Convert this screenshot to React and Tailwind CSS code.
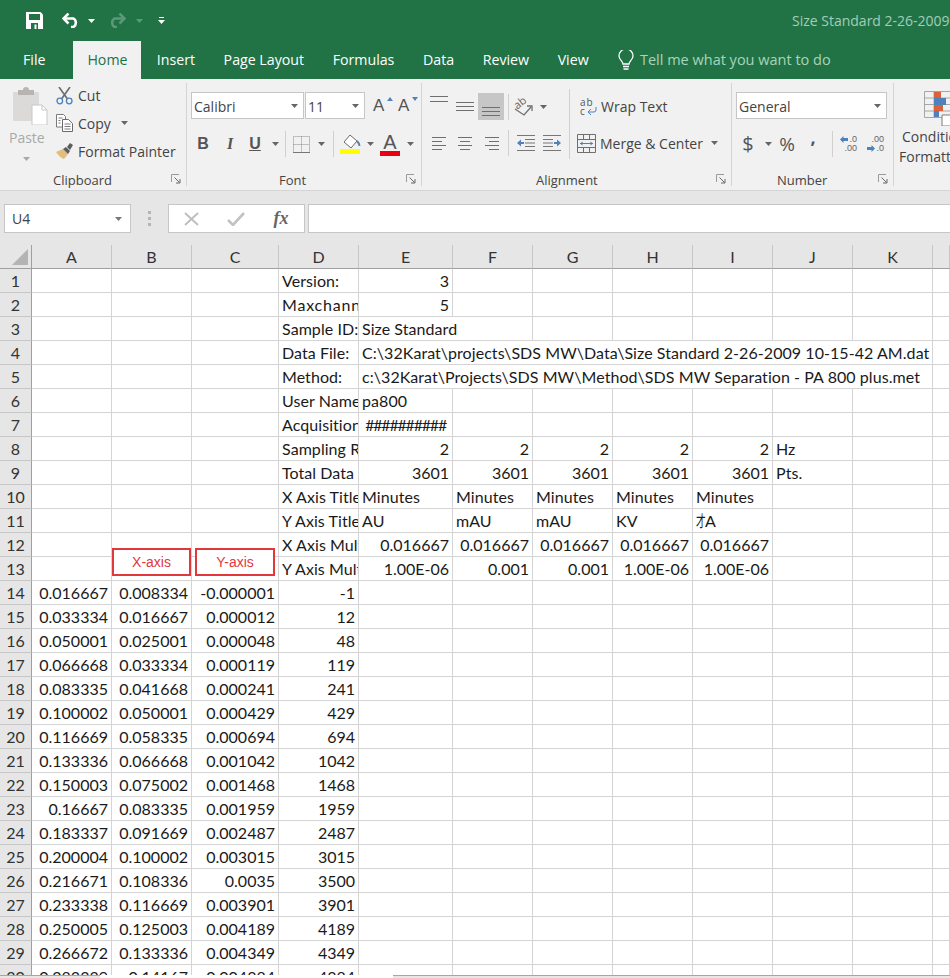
import React from 'react';

const COLS = ['A', 'B', 'C', 'D', 'E', 'F', 'G', 'H', 'I', 'J', 'K', ''];
const L = (t, span) => ({ t, span });
const N = (t) => ({ t, right: true });

const HEAD_ROWS = {
  1: { 3: L('Version:'), 4: N('3') },
  2: { 3: { t: 'Maxchannels:', wide: true }, 4: N('5') },
  3: { 3: L('Sample ID:'), 4: L('Size Standard', 2) },
  4: { 3: L('Data File:'), 4: L('C:\\32Karat\\projects\\SDS MW\\Data\\Size Standard 2-26-2009 10-15-42 AM.dat', 7) },
  5: { 3: L('Method:'), 4: L('c:\\32Karat\\Projects\\SDS MW\\Method\\SDS MW Separation - PA 800 plus.met', 7) },
  6: { 3: L('User Name:'), 4: L('pa800') },
  7: { 3: L('Acquisition Date:'), 4: { t: '##########', right: true, hash: true } },
  8: { 3: L('Sampling Rate:'), 4: N('2'), 5: N('2'), 6: N('2'), 7: N('2'), 8: N('2'), 9: L('Hz') },
  9: { 3: L('Total Data Points:'), 4: N('3601'), 5: N('3601'), 6: N('3601'), 7: N('3601'), 8: N('3601'), 9: L('Pts.') },
  10: { 3: L('X Axis Title:'), 4: L('Minutes'), 5: L('Minutes'), 6: L('Minutes'), 7: L('Minutes'), 8: L('Minutes') },
  11: { 3: L('Y Axis Title:'), 4: L('AU'), 5: L('mAU'), 6: L('mAU'), 7: L('KV'), 8: { t: <><span className="inline-block w-[9px] origin-left scale-x-[0.6]">才</span>A</> } },
  12: { 3: L('X Axis Multiplier:'), 4: N('0.016667'), 5: N('0.016667'), 6: N('0.016667'), 7: N('0.016667'), 8: N('0.016667') },
  13: { 3: L('Y Axis Multiplier:'), 4: N('1.00E-06'), 5: N('0.001'), 6: N('0.001'), 7: N('1.00E-06'), 8: N('1.00E-06') },
};

const DATA_ROWS = [
  ['0.016667', '0.008334', '-0.000001', '-1'],
  ['0.033334', '0.016667', '0.000012', '12'],
  ['0.050001', '0.025001', '0.000048', '48'],
  ['0.066668', '0.033334', '0.000119', '119'],
  ['0.083335', '0.041668', '0.000241', '241'],
  ['0.100002', '0.050001', '0.000429', '429'],
  ['0.116669', '0.058335', '0.000694', '694'],
  ['0.133336', '0.066668', '0.001042', '1042'],
  ['0.150003', '0.075002', '0.001468', '1468'],
  ['0.16667', '0.083335', '0.001959', '1959'],
  ['0.183337', '0.091669', '0.002487', '2487'],
  ['0.200004', '0.100002', '0.003015', '3015'],
  ['0.216671', '0.108336', '0.0035', '3500'],
  ['0.233338', '0.116669', '0.003901', '3901'],
  ['0.250005', '0.125003', '0.004189', '4189'],
  ['0.266672', '0.133336', '0.004349', '4349'],
  ['0.283339', '0.14167', '0.004384', '4384'],
];

function rowCells(n) {
  if (n <= 13) return HEAD_ROWS[n] || {};
  const d = DATA_ROWS[n - 14];
  return { 0: N(d[0]), 1: N(d[1]), 2: N(d[2]), 3: N(d[3]) };
}

function Caret({ color = '#666' }) {
  return (
    <svg width="7" height="4" viewBox="0 0 7 4" className="shrink-0">
      <path d="M0 0h7L3.5 4z" fill={color} />
    </svg>
  );
}

function Box({ w, children, className = '' }) {
  return <div style={{ width: w }} className={`flex items-center justify-center shrink-0 h-full ${className}`}>{children}</div>;
}

function Sep() {
  return <div className="w-px h-[26px] bg-[#d0d0d0] shrink-0" />;
}

function Launcher() {
  return (
    <svg width="10" height="10" viewBox="0 0 10 10" className="shrink-0">
      <path d="M.5 8V.5H8" fill="none" stroke="#9a9a9a" />
      <path d="M3.5 3.5l5 5M9 5v4H5" fill="none" stroke="#666" />
    </svg>
  );
}

function Group({ width, label, labelPad, children }) {
  return (
    <div style={{ width }} className="h-[103px] shrink-0 flex flex-col border-r border-[#d4d4d4]">
      <div className="flex-1 min-h-0">{children}</div>
      <div className="h-[14px] flex items-center justify-between text-[13px] leading-[14px] text-[#444] pr-[5px]">
        <span className="pt-[2px]" style={{ paddingLeft: labelPad }}>{label}</span>
        <Launcher />
      </div>
    </div>
  );
}

function Select({ w, text, className = '' }) {
  return (
    <div style={{ width: w }} className={`h-[27px] shrink-0 bg-white border border-[#c6c6c6] flex items-center justify-between pl-[2px] pr-[5px] text-[14px] text-[#444] ${className}`}>
      <span className="pt-[1px]">{text}</span>
      <Caret />
    </div>
  );
}

function Lines({ widths, gap = 4 }) {
  return (
    <div className="flex flex-col items-center" style={{ gap }}>
      {widths.map((w, i) => <div key={i} style={{ width: w }} className="h-px bg-[#6f6f6f]" />)}
    </div>
  );
}

function LinesAlign({ align }) {
  const rows = [14, 10, 14, 10];
  const cls = align === 'left' ? 'items-start' : align === 'right' ? 'items-end' : 'items-center';
  return (
    <div className={`flex flex-col gap-[3px] w-[15px] ${cls}`}>
      {rows.map((w, i) => <div key={i} style={{ width: w }} className="h-px bg-[#6f6f6f]" />)}
    </div>
  );
}

function SaveIcon() {
  return (
    <svg width="17" height="17" viewBox="0 0 17 17">
      <path d="M0 0h14.5L17 2.5V17H0z" fill="#fff" />
      <path d="M3 2h11v6H3z" fill="#217346" />
      <path d="M5 11h7v6H5z" fill="#217346" />
      <path d="M8.5 12.5h2V17h-2z" fill="#fff" />
    </svg>
  );
}

function UndoIcon({ faded }) {
  const style = faded ? { transform: 'scaleX(-1)' } : undefined;
  return (
    <svg width="19" height="15" viewBox="0 0 19 15" style={style}>
      <path d="M2 5.5h9.5a5 5 0 0 1 0 8.5H9" fill="none" stroke={faded ? '#5d9878' : '#fff'} strokeWidth="2.6" />
      <path d="M6.5 .5L1.5 5.5l5 5" fill="none" stroke={faded ? '#5d9878' : '#fff'} strokeWidth="2.6" />
    </svg>
  );
}

function PasteIcon() {
  return (
    <svg width="36" height="38" viewBox="0 0 36 38">
      <path d="M1 5h26v29H1z" fill="#dcd9d9" />
      <path d="M6 3h5a3 3 0 0 1 6 0h5v5H6z" fill="#b7b4b4" />
      <path d="M20 18h10l5 5v15H20z" fill="#fff" stroke="#c8c8c8" />
      <path d="M30 18v5h5" fill="none" stroke="#c8c8c8" />
    </svg>
  );
}

function CutIcon() {
  return (
    <svg width="17" height="18" viewBox="0 0 17 18">
      <path d="M3 0l8.5 12M14 0L5.5 12" stroke="#6b6b6b" strokeWidth="1.6" fill="none" />
      <circle cx="3.8" cy="14" r="2.8" fill="none" stroke="#4f81bd" strokeWidth="1.3" />
      <circle cx="13.2" cy="14" r="2.8" fill="none" stroke="#4f81bd" strokeWidth="1.3" />
    </svg>
  );
}

function CopyIcon() {
  return (
    <svg width="17" height="18" viewBox="0 0 17 18">
      <path d="M.5.5h7l2 2V13H.5z" fill="#fff" stroke="#7a7a7a" />
      <path d="M6.5 5.5h6l4 4v8h-10z" fill="#fff" stroke="#6b6b6b" />
      <path d="M8.5 10h6M8.5 12.5h6M8.5 15h6M2.5 4h4M2.5 6.5h2M2.5 9h2" stroke="#7a7a7a" />
    </svg>
  );
}

function PainterIcon() {
  return (
    <svg width="18" height="16" viewBox="0 0 18 16">
      <path d="M0 9l7-3 5 5-4 5c-2 0-6-4-8-7z" fill="#e2bd7b" />
      <path d="M7 6l5 5 2-3-4-4z" fill="#5d5d5d" />
      <path d="M11 4l3-4 3 2-3 5z" fill="#5d5d5d" />
    </svg>
  );
}

function BorderIcon() {
  return (
    <svg width="17" height="17" viewBox="0 0 17 17">
      <path d="M.5.5h16v16H.5zM8.5.5v16M.5 8.5h16" fill="none" stroke="#8a8a8a" strokeDasharray="1 1" />
      <path d="M0 16.5h17" stroke="#777" fill="none" />
    </svg>
  );
}

function FillIcon() {
  return (
    <svg width="21" height="20" viewBox="0 0 21 20">
      <path d="M4 8l6-7 7 6-6 7z" fill="#fff" stroke="#6b6b6b" />
      <path d="M17 7c2 2 2.5 3 2.5 5" fill="none" stroke="#4f81bd" strokeWidth="2" />
      <path d="M0 15h20v5H0z" fill="#ffff00" />
    </svg>
  );
}

function FontGrow({ up }) {
  return (
    <div className="relative w-[17px] h-[18px] text-[17px] leading-[18px] text-[#555] font-['Liberation_Sans',sans-serif]">
      A
      <svg width="6" height="4" viewBox="0 0 6 4" className="absolute right-[-3px] top-0">
        <path d={up ? 'M0 4h6L3 0z' : 'M0 0h6L3 4z'} fill="#4f81bd" />
      </svg>
    </div>
  );
}

function OrientIcon() {
  return (
    <svg width="20" height="18" viewBox="0 0 20 18">
      <path d="M1 11l9 6 7-8" fill="none" stroke="#707070" strokeWidth="1.3" />
      <path d="M13 8h5v5" fill="none" stroke="#707070" strokeWidth="1.3" />
      <text x="1" y="9" fontSize="11" fill="#666" transform="rotate(-38 6 7)" fontFamily="Open Sans">ab</text>
    </svg>
  );
}

function IndentIcon({ flip }) {
  return (
    <svg width="18" height="16" viewBox="0 0 18 16" style={flip ? { transform: 'scaleX(-1)' } : undefined}>
      <path d="M0 .5h18M8 4.5h10M8 8h10M8 11.5h10M0 15.5h18" stroke="#777" fill="none" />
      <path d="M0 8l4-3.5V7h3v2H4v2.5z" fill="#4f81bd" />
    </svg>
  );
}

function WrapIcon() {
  return (
    <div className="relative w-[17px] h-[17px] text-[10px] leading-[8px] text-[#555]">
      <div className="tracking-[1px]">ab</div>
      <div className="mt-[1px]">c</div>
      <svg width="10" height="8" viewBox="0 0 10 8" className="absolute right-0 bottom-0">
        <path d="M9 0v3a2 2 0 0 1-2 2H2M4 2L1 5l3 3" fill="none" stroke="#4f81bd" />
      </svg>
    </div>
  );
}

function MergeIcon() {
  return (
    <svg width="19" height="19" viewBox="0 0 19 19">
      <path d="M.5.5h18v18H.5zM.5 5.5h18M.5 13.5h18M6.5.5v5M12.5.5v5M6.5 13.5v5M12.5 13.5v5" fill="none" stroke="#6f6f6f" />
      <path d="M3 9.5h13" stroke="#4f81bd" />
      <path d="M3 9.5l2.500-2v4zM16 9.5l-2.500-2v4z" fill="#4f81bd" />
    </svg>
  );
}

function DecimalIcon({ more }) {
  const Arrow = ({ dir }) => (
    <svg width="8" height="7" viewBox="0 0 8 7" className="mr-px">
      <path d={dir === 'l' ? 'M0 3.5L3.5 0v2H8v3H3.5v2z' : 'M8 3.5L4.5 0v2H0v3h4.5v2z'} fill="#4f81bd" />
    </svg>
  );
  return (
    <div className="flex flex-col items-end w-[18px] text-[9px] leading-[9px] text-[#666] font-['Liberation_Sans',sans-serif]">
      {more ? (
        <>
          <div>.00</div>
          <div className="flex items-center"><Arrow dir="r" />.0</div>
        </>
      ) : (
        <>
          <div className="flex items-center"><Arrow dir="l" />.0</div>
          <div>.00</div>
        </>
      )}
    </div>
  );
}

function CondIcon() {
  return (
    <svg width="26" height="35" viewBox="0 0 26 35">
      <path d="M.5.5h26v26H.5zM.5 7h26M.5 13.5h26M.5 20h26M10 .5v26" fill="none" stroke="#a6a6a6" />
      <path d="M10 1h7v6h-7z" fill="#d9613b" />
      <path d="M10 7h12v7H10z" fill="#4f81bd" />
      <path d="M10 14h9v6h-9z" fill="#d9613b" />
      <path d="M10 20h5v6h-5z" fill="#4f81bd" />
      <path d="M18 24h9v11h-9z" fill="#fff" stroke="#7a7a7a" />
    </svg>
  );
}

function TitleBar() {
  const tabs = ['Insert', 'Page Layout', 'Formulas', 'Data', 'Review', 'View'];
  return (
    <div className="h-[79px] bg-[#217346] shrink-0 flex flex-col">
      <div className="h-[41px] flex items-center pl-[26px]">
        <SaveIcon />
        <div className="ml-[19px]"><UndoIcon /></div>
        <div className="ml-[7px]"><Caret color="#fff" /></div>
        <div className="ml-[12px]"><UndoIcon faded /></div>
        <div className="ml-[10px]"><Caret color="#5d9878" /></div>
        <div className="ml-[15px] flex flex-col items-center gap-[2px]">
          <div className="w-[5px] h-px bg-white" />
          <Caret color="#fff" />
        </div>
        <div className="ml-[627px] text-[14px] whitespace-nowrap text-[#a3cdb6]">Size Standard 2-26-2009</div>
      </div>
      <div className="h-[38px] flex items-stretch text-[14.2px] text-white pl-[9px]">
        <div className="px-[14px] flex items-center">File</div>
        <div className="w-[68px] ml-[14px] mr-px bg-[#f1f1f1] text-[#217346] flex items-center justify-center">Home</div>
        {tabs.map((t) => <div key={t} className="px-[14.3px] flex items-center whitespace-nowrap">{t}</div>)}
        <div className="ml-[15px] flex items-center">
          <svg width="16" height="21" viewBox="0 0 16 21">
            <path d="M5 14c0-3-4-4-4-8a7 7 0 0 1 14 0c0 4-4 5-4 8z" fill="none" stroke="#fff" strokeWidth="1.3" />
            <path d="M5 16.5h6M5.5 19h5" stroke="#fff" strokeWidth="1.3" />
          </svg>
          <span className="ml-[6px] text-[14.5px] text-[#a9d3bb] whitespace-nowrap">Tell me what you want to do</span>
        </div>
      </div>
    </div>
  );
}

function Ribbon() {
  return (
    <div className="h-[112px] shrink-0 bg-[#f1f1f1] border-b border-[#d4d4d4] pt-[4px] flex items-start overflow-hidden text-[14px] text-[#444]">
      <Group width={187} label="Clipboard" labelPad={53}>
        <div className="flex h-full">
          <div className="w-[56px] pl-[12px] pt-[4px] shrink-0 flex flex-col">
            <PasteIcon />
            <div className="w-[35px] -ml-[3px] text-center text-[#a9a9a9] mt-[2px]">Paste</div>
            <div className="w-[35px] -ml-[3px] flex justify-center mt-[9px]"><Caret color="#a9a9a9" /></div>
          </div>
          <div className="flex flex-col -mt-[1px]">
            <div className="h-[27.5px] flex items-center whitespace-nowrap"><CutIcon /><span className="ml-[5px]">Cut</span></div>
            <div className="h-[27.5px] flex items-center whitespace-nowrap"><CopyIcon /><span className="ml-[5px]">Copy</span><span className="ml-[10px]"><Caret /></span></div>
            <div className="h-[28px] flex items-center whitespace-nowrap"><PainterIcon /><span className="ml-[4px]">Format Painter</span></div>
          </div>
        </div>
      </Group>

      <Group width={235} label="Font" labelPad={92}>
        <div className="pl-[4px] pt-[9px]">
          <div className="flex items-center h-[27px]">
            <Select w={113} text="Calibri" />
            <Select w={60} text="11" className="ml-px" />
            <div className="ml-[8px]"><FontGrow up /></div>
            <div className="ml-[8px]"><FontGrow /></div>
          </div>
          <div className="flex items-center h-[26px] mt-[12px] text-[#555] text-[16px] font-['Liberation_Sans',sans-serif]">
            <Box w={24}><b>B</b></Box>
            <Box w={30}><i className="font-bold font-['Liberation_Serif',serif]">I</i></Box>
            <Box w={20}><b className="underline">U</b></Box>
            <Box w={20}><Caret /></Box>
            <Sep />
            <Box w={31}><BorderIcon /></Box>
            <Box w={8}><Caret /></Box>
            <Box w={8} />
            <Sep />
            <Box w={32}><FillIcon /></Box>
            <Box w={8}><Caret /></Box>
            <Box w={32}>
              <div className="flex flex-col items-center">
                <span className="text-[20px] leading-[18px] text-[#555]">A</span>
                <div className="w-[20px] h-[5px] bg-[#e60012]" />
              </div>
            </Box>
            <Box w={8}><Caret /></Box>
          </div>
        </div>
      </Group>

      <Group width={310} label="Alignment" labelPad={114}>
        <div className="flex h-full">
          <div className="w-[147px] shrink-0 pl-[4px] pt-[10px]">
            <div className="flex items-center h-[27px]">
              <Box w={26} className="items-start pt-[3px]"><Lines widths={[18, 18]} /></Box>
              <Box w={26}><Lines widths={[18, 18, 18]} gap={3} /></Box>
              <Box w={26} className="bg-[#c6c6c6] items-end pb-[4px]"><Lines widths={[18, 18, 18]} gap={3} /></Box>
              <div className="ml-[4px]"><Sep /></div>
              <Box w={30}><OrientIcon /></Box>
              <Box w={8}><Caret /></Box>
            </div>
            <div className="flex items-center h-[26px] mt-[10px]">
              <Box w={26}><LinesAlign align="left" /></Box>
              <Box w={26}><LinesAlign align="center" /></Box>
              <Box w={26}><LinesAlign align="right" /></Box>
              <div className="ml-[4px]"><Sep /></div>
              <Box w={4} />
              <Box w={26}><IndentIcon /></Box>
              <Box w={26}><IndentIcon flip /></Box>
            </div>
          </div>
          <div className="w-px h-[70px] mt-[6px] bg-[#d0d0d0] shrink-0" />
          <div className="pt-[10px] pl-[7px]">
            <div className="flex items-center h-[27px] whitespace-nowrap">
              <div className="ml-[3px]"><WrapIcon /></div>
              <span className="ml-[4px]">Wrap Text</span>
            </div>
            <div className="flex items-center h-[26px] mt-[10px] whitespace-nowrap">
              <MergeIcon />
              <span className="ml-[4px]">Merge &amp; Center</span>
              <span className="ml-[8px]"><Caret /></span>
            </div>
          </div>
        </div>
      </Group>

      <Group width={162} label="Number" labelPad={45}>
        <div className="pl-[4px] pt-[9px]">
          <Select w={151} text="General" />
          <div className="flex items-center h-[26px] mt-[12px] text-[#555]">
            <Box w={24} className="text-[20px]">$</Box>
            <Box w={16}><Caret /></Box>
            <Box w={22} className="text-[19px]">%</Box>
            <Box w={30} className="text-[18px] font-bold pb-[14px]">,</Box>
            <div className="ml-[4px]"><Sep /></div>
            <Box w={30}><DecimalIcon /></Box>
            <Box w={24}><DecimalIcon more /></Box>
          </div>
        </div>
      </Group>

      <div className="flex-1 min-w-0 overflow-hidden h-[103px] whitespace-nowrap">
        <div className="pl-[30px] pt-[8px]"><CondIcon /></div>
        <div className="pl-[8px] leading-[20px] mt-[1px]">Conditional</div>
        <div className="pl-[5px] leading-[20px]">Formatting</div>
      </div>
    </div>
  );
}

function FormulaBar() {
  return (
    <div className="h-[54px] shrink-0 bg-[#e6e6e6] flex items-center pl-[4px] pt-[1px] text-[14px] text-[#444]">
      <div className="w-[127px] h-[29px] bg-white border border-[#c6c6c6] flex items-center justify-between pl-[7px] pr-[8px] shrink-0">
        <span>U4</span>
        <Caret color="#777" />
      </div>
      <div className="w-[37px] flex justify-center shrink-0">
        <div className="flex flex-col gap-[3px]">
          <div className="w-[3px] h-[3px] bg-[#b5b5b5]" />
          <div className="w-[3px] h-[3px] bg-[#b5b5b5]" />
          <div className="w-[3px] h-[3px] bg-[#b5b5b5]" />
        </div>
      </div>
      <div className="w-[137px] h-[29px] bg-white border border-[#c6c6c6] flex items-center shrink-0">
        <Box w={44}>
          <svg width="15" height="14" viewBox="0 0 15 14"><path d="M1 1l13 12M14 1L1 13" stroke="#bdbdbd" strokeWidth="1.8" /></svg>
        </Box>
        <Box w={46}>
          <svg width="18" height="14" viewBox="0 0 18 14"><path d="M1 8l5 5L17 1" fill="none" stroke="#c2c2c2" strokeWidth="2.6" /></svg>
        </Box>
        <Box w={44}><span className="font-['Liberation_Serif',serif] italic font-bold text-[18px] text-[#666]">fx</span></Box>
      </div>
      <div className="flex-1 h-[29px] ml-[3px] bg-white border border-[#c6c6c6] border-r-0" />
    </div>
  );
}

function Sheet() {
  const rows = [];
  for (let n = 1; n <= 30; n++) rows.push(n);
  return (
    <div className="relative flex-1 min-h-0 overflow-hidden bg-white font-['Lato','Noto_Sans_CJK_SC',sans-serif] text-[16px] text-[#1a1a1a]">
      <div className="grid grid-cols-[32px_80px_80px_87px_80px_94px_80px_80px_80px_80px_80px_80px_17px] auto-rows-[24px]">
        <div className="bg-[#e6e6e6] border-r border-b border-[#9f9f9f] flex items-end justify-end pr-[3px] pb-[3px]">
          <div className="w-[16px] h-[16px] bg-[#b4b4b4] [clip-path:polygon(100%_0,100%_100%,0_100%)]" />
        </div>
        {COLS.map((c, i) => (
          <div key={i} className="bg-[#e6e6e6] border-r border-r-[#c6c6c6] border-b border-b-[#9f9f9f] flex items-center justify-center text-[#333]">{c}</div>
        ))}
        {rows.map((n) => {
          const data = rowCells(n);
          const out = [];
          for (let c = 0; c < COLS.length; c++) {
            const cell = data[c];
            const span = cell && cell.span ? cell.span : 1;
            out.push(
              <div
                key={c}
                style={span > 1 ? { gridColumn: `span ${span}` } : undefined}
                className={`border-r border-b border-[#d4d4d4] overflow-hidden whitespace-nowrap leading-[24px] pl-[3px] ${cell && cell.hash ? 'pr-[6px] tracking-[-1.2px]' : 'pr-[3px]'} ${cell && cell.right ? 'text-right' : 'tracking-[0.06px]'} ${cell && cell.wide ? 'tracking-[0.8px]' : ''}`}
              >
                {cell ? cell.t : ''}
              </div>
            );
            c += span - 1;
          }
          return (
            <React.Fragment key={n}>
              <div className="bg-[#e6e6e6] border-r border-r-[#9f9f9f] border-b border-b-[#c6c6c6] flex items-center justify-center text-[#333]">{n}</div>
              {out}
            </React.Fragment>
          );
        })}
      </div>
      <div className="absolute left-[112px] top-[303px] w-[79px] h-[28px] bg-white border-2 border-[#e2383c] flex items-center justify-center text-[14px] text-[#e2383c] font-['Liberation_Sans',sans-serif]">X-axis</div>
      <div className="absolute left-[195px] top-[303px] w-[80px] h-[28px] bg-white border-2 border-[#e2383c] flex items-center justify-center text-[14px] text-[#e2383c] font-['Liberation_Sans',sans-serif]">Y-axis</div>
    </div>
  );
}

export default function App() {
  return (
    <div className="w-[950px] h-[978px] overflow-hidden flex flex-col bg-white font-['Open_Sans',sans-serif]">
      <TitleBar />
      <Ribbon />
      <FormulaBar />
      <Sheet />
      <div className="h-[3px] shrink-0 flex bg-white">
        <div className="w-[100px] bg-[#e6e6e6] border-t border-[#a6a6a6]" />
        <div className="w-[293px]" />
        <div className="flex-1 bg-[#e6e6e6] border-t border-[#a6a6a6]" />
      </div>
    </div>
  );
}
